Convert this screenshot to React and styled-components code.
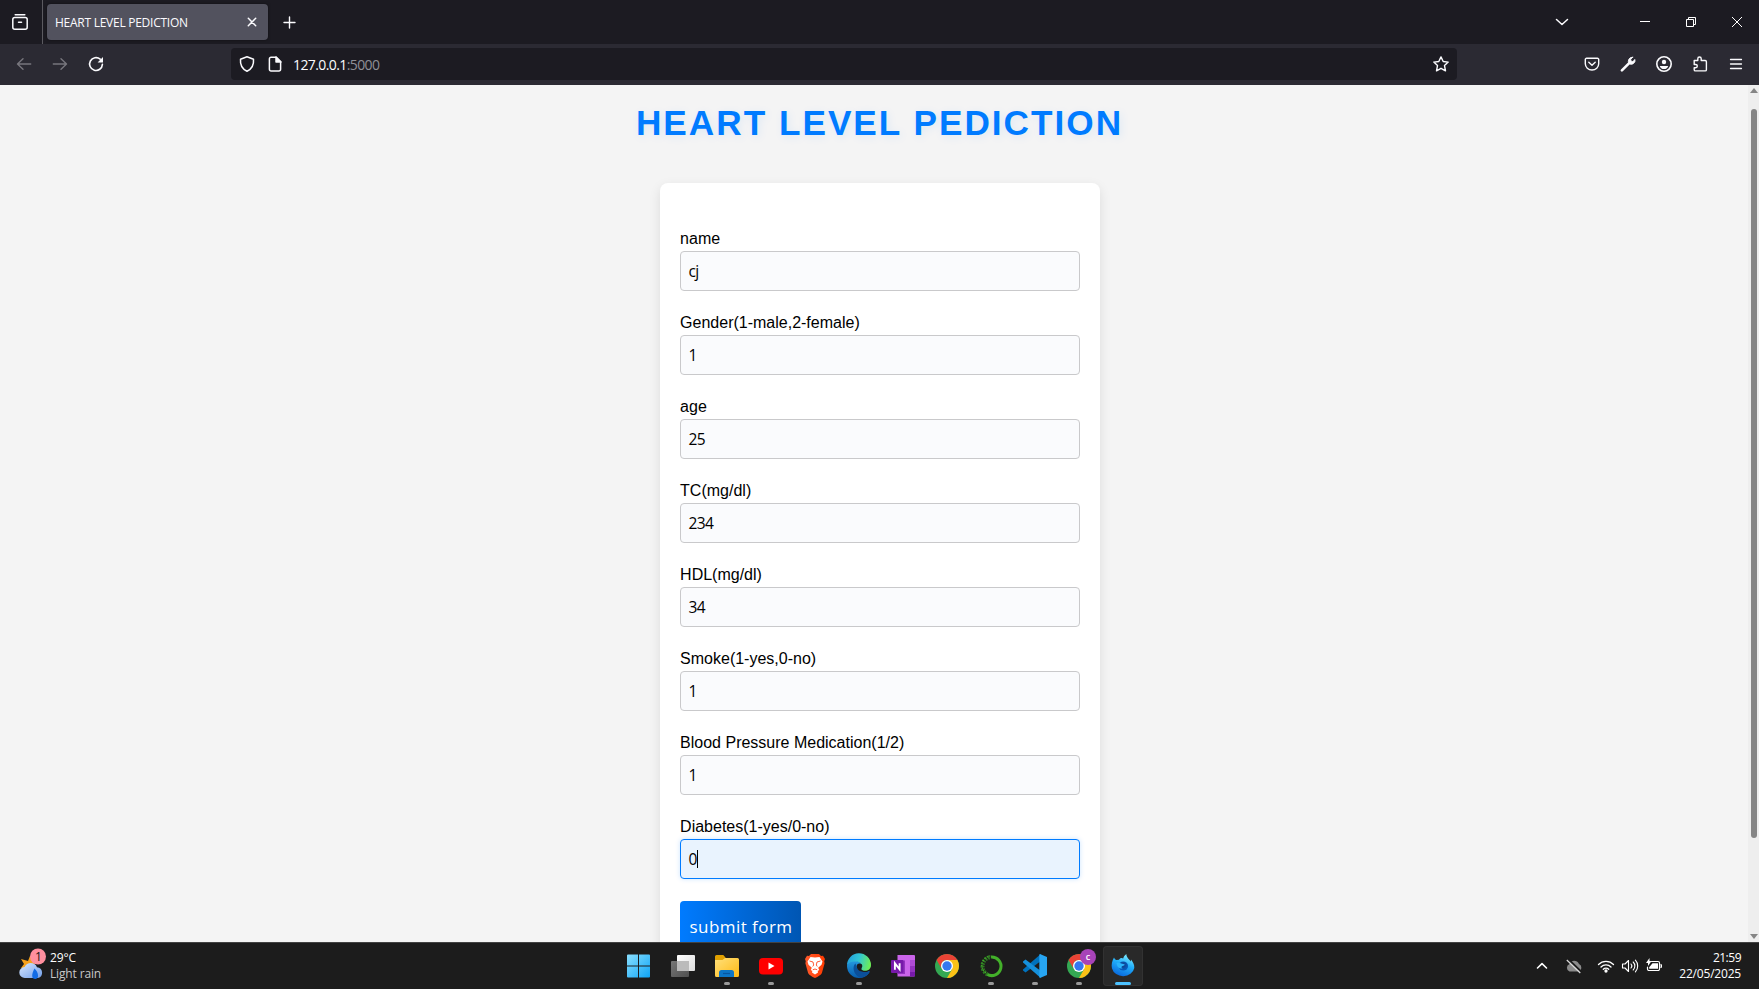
import React from 'react';
import styled, { createGlobalStyle } from 'styled-components';

const ui = '"Open Sans", "Noto Sans", sans-serif';

const GlobalStyle = createGlobalStyle`
  * { box-sizing: border-box; }
  html, body { margin: 0; overflow: hidden; }
  body { font-family: ${ui}; }
  svg { display: block; flex: none; overflow: visible; }
`;

const Screen = styled.div`
  width: 1759px;
  height: 989px;
  display: flex;
  flex-direction: column;
  overflow: hidden;
`;

/* ---------- browser chrome ---------- */
const TabStrip = styled.div`
  height: 44px;
  flex: none;
  display: flex;
  align-items: center;
  background: #1c1b22;
  color: #fbfbfe;
`;
const Slot = styled.div`
  width: ${(p) => p.$w || 36}px;
  height: 36px;
  flex: none;
  display: flex;
  align-items: center;
  justify-content: center;
  color: ${(p) => p.$color || '#fbfbfe'};
`;
const ArchiveSlot = styled(Slot)`
  width: 43px;
  height: 44px;
  padding-right: 2px;
  border-right: 1px solid #5b5a60;
`;
const NewTabSlot = styled(Slot)`
  width: 35px;
  padding-top: 2px;
`;
const Tab = styled.div`
  width: 221px;
  height: 36px;
  margin: 0 4px;
  padding: 0 8px;
  display: flex;
  align-items: center;
  justify-content: space-between;
  border-radius: 4px;
  background: #52525e;
  box-shadow: 0 0 3px rgba(0, 0, 0, 0.5);
`;
const TabTitle = styled.span`
  padding-top: 1px;
  font-size: 12px;
  line-height: 16px;
  letter-spacing: -0.26px;
  white-space: nowrap;
`;
const Spacer = styled.div`
  flex: 1;
`;
const WindowControls = styled.div`
  display: flex;
  margin-left: 42px;
  margin-right: -1px;
`;
const NavBar = styled.div`
  height: 41px;
  flex: none;
  display: flex;
  align-items: center;
  padding: 0 5px 1px 6px;
  background: #2b2a33;
`;
const UrlBar = styled.div`
  width: 1226px;
  height: 32px;
  margin-left: 117px;
  display: flex;
  align-items: center;
  padding-left: 2px;
  padding-right: 2px;
  border-radius: 4px;
  background: #1c1b22;
`;
const Url = styled.span`
  flex: 1;
  margin-left: 4px;
  padding-top: 2px;
  font-size: 14px;
  line-height: 20px;
  letter-spacing: -0.6px;
  color: #fbfbfe;
  white-space: nowrap;
`;
const Port = styled.span`
  color: #8f8f96;
`;

/* ---------- page ---------- */
const Viewport = styled.div`
  flex: 1;
  min-height: 0;
  display: flex;
  background: #f4f4f4;
`;
const Page = styled.main`
  flex: 1;
  min-width: 0;
  padding-left: 11px;
  display: flex;
  flex-direction: column;
  align-items: center;
  overflow: hidden;
  font-family: "Liberation Sans", Arial, sans-serif;
`;
const Title = styled.h1`
  flex: none;
  margin: 18px 0 0;
  height: 40px;
  font-size: 35.2px;
  line-height: 40px;
  font-weight: 700;
  letter-spacing: 2px;
  color: #007bff;
  text-shadow: 2px 2px 8px rgba(0, 123, 255, 0.1);
  white-space: nowrap;
`;
const Card = styled.section`
  flex: none;
  width: 440px;
  margin-top: 40px;
  padding: 46px 20px 20px;
  border-radius: 8px;
  background: #fff;
  box-shadow: 0 4px 12px rgba(0, 0, 0, 0.1);
`;
const Field = styled.label`
  display: block;
  height: 84px;
`;
const Caption = styled.span`
  display: block;
  height: 22px;
  padding-left: 0.6px;
  font-size: 16px;
  line-height: 20px;
  color: #000;
`;
const Input = styled.div`
  height: 40px;
  padding: 0 8px;
  display: flex;
  align-items: center;
  border: 1px solid ${(p) => (p.$focused ? '#007bff' : '#c9c9cb')};
  border-radius: 4px;
  background: ${(p) => (p.$focused ? '#e9f3fe' : '#fafbfd')};
  box-shadow: ${(p) => (p.$focused ? '0 0 5px rgba(0, 123, 255, 0.2)' : 'none')};
  font-family: ${ui};
  font-size: 15.5px;
  letter-spacing: -0.6px;
  color: #000;
`;
const Caret = styled.span`
  width: 1px;
  height: 18px;
  background: #000;
`;
const Submit = styled.button`
  display: block;
  width: 121px;
  height: 52px;
  padding: 0 0 2px 2px;
  border: 0;
  border-radius: 4px;
  background: linear-gradient(to right, #007bff, #0056b3);
  color: #fff;
  font-family: ${ui};
  font-size: 17px;
  letter-spacing: 0.45px;
  white-space: nowrap;
`;
const Scrollbar = styled.div`
  width: 11px;
  display: flex;
  flex-direction: column;
  align-items: center;
  padding: 3px 0;
  background: #eeeeee;
`;
const Thumb = styled.div`
  width: 6px;
  height: 729px;
  margin-top: 16px;
  border-radius: 3px;
  background: #858585;
`;

/* ---------- taskbar ---------- */
const Taskbar = styled.div`
  height: 47px;
  flex: none;
  display: grid;
  grid-template-columns: 619px 524px 1fr;
  border-top: 1px solid #424242;
  background: #1c1c1c;
  color: #fff;
`;
const Weather = styled.div`
  display: flex;
  align-items: center;
  padding-left: 19px;
  gap: 6px;
`;
const Lines = styled.div`
  display: flex;
  flex-direction: column;
  align-items: ${(p) => (p.$end ? 'flex-end' : 'flex-start')};
  font-size: 12px;
  line-height: 16px;
  white-space: nowrap;
`;
const Line = styled.span`
  letter-spacing: ${(p) => p.$track}px;
  color: ${(p) => (p.$dim ? '#c8c8c8' : '#fff')};
`;
const Apps = styled.div`
  display: flex;
  gap: 4px;
  padding-top: 3px;
`;
const AppButton = styled.div`
  width: 40px;
  height: 40px;
  display: flex;
  flex-direction: column;
  align-items: center;
  padding-top: 8px;
  border-radius: 4px;
  background: ${(p) => (p.$active ? '#292929' : 'transparent')};
  box-shadow: ${(p) => (p.$active ? 'inset 0 0 0 1px #323232' : 'none')};
`;
const Running = styled.div`
  width: ${(p) => (p.$active ? 16 : 6)}px;
  height: 3px;
  margin-top: 4px;
  border-radius: 2px;
  background: ${(p) => (p.$active ? '#4cc2ff' : '#999')};
`;
const Tray = styled.div`
  display: flex;
  align-items: center;
  justify-content: flex-end;
  padding-right: 18px;
`;
const TraySlot = styled.div`
  width: ${(p) => p.$w}px;
  flex: none;
  display: flex;
  justify-content: center;
`;
const Clock = styled(Lines)`
  width: 71px;
`;

const Glyph = ({ size = 16, sw = 1.4, children }) => (
  <svg width={size} height={size} viewBox={`0 0 ${size} ${size}`} fill="none" stroke="currentColor" strokeWidth={sw} strokeLinecap="round" strokeLinejoin="round">
    {children}
  </svg>
);

const Archive = () => (
  <Glyph sw={1.5}>
    <path d="M3.2 .8h9.6" />
    <rect x=".8" y="3.5" width="14.4" height="11.7" rx="2" />
    <path d="M6.5 8.2h3" />
  </Glyph>
);
const Back = () => <Glyph><path d="M14.7 8H1.7M7 2.7 1.5 8 7 13.3" /></Glyph>;
const Forward = () => <Glyph><path d="M1.3 8h13M9 2.7 14.5 8 9 13.3" /></Glyph>;
const Reload = () => (
  <Glyph sw={1.6}>
    <path d="M12.2 3.2A6.4 6.4 0 1 0 14.4 8.4" />
    <path d="M15 1v5.4H9.6z" fill="currentColor" stroke="none" />
  </Glyph>
);
const Shield = () => <Glyph sw={1.5}><path d="M8 .7 14.5 3.2c.5 5.4-1.7 9.7-6.5 12C3.2 12.900 1 8.600 1.500 3.200z" /></Glyph>;
const PageIcon = () => (
  <Glyph sw={1.5}>
    <path d="M4 1.300h5.200L13.600 5.700v7.600a1.600 1.600 0 0 1-1.600 1.600H4a1.600 1.600 0 0 1-1.600-1.600V2.900A1.600 1.600 0 0 1 4 1.300z" />
    <path d="M9 1v5h5z" fill="currentColor" />
  </Glyph>
);
const Star = () => <Glyph sw={1.4}><path d="M8 .9 10.200 5.500l5 .6-3.700 3.500 1 5.200L8 12.300l-4.500 2.500 1-5.200L.8 6.100l5-.6z" /></Glyph>;
const Pocket = () => (
  <Glyph sw={1.4}>
    <path d="M2.500 2.300h11a1.200 1.200 0 0 1 1.200 1.200v4.300a6.700 6.200 0 0 1-13.400 0V3.500a1.200 1.200 0 0 1 1.200-1.200z" />
    <path d="M4.800 6.300 8 9.300l3.200-3" />
  </Glyph>
);
const Wrench = () => (
  <Glyph>
    <path d="m1.900 14.300 7-7" strokeWidth="2.600" />
    <path d="M12.600 1.200 10.700 3.500l.4 1.700 1.700.4 2.200-2.100a4 4 0 0 1-5.600 4.400 4 4 0 0 1 3.200-6.700z" fill="currentColor" strokeWidth=".9" />
  </Glyph>
);
const Account = () => (
  <Glyph sw={1.600}>
    <circle cx="8" cy="8" r="7.200" />
    <circle cx="8" cy="6" r="2.200" fill="currentColor" stroke="none" />
    <path d="M3.800 10h8.400c-.4 2-2 3.100-4.200 3.100S4.200 12 3.800 10z" fill="currentColor" stroke="none" />
  </Glyph>
);
const Extension = () => (
  <Glyph sw={1.400}>
    <path d="M2.200 4.500h3.600V2.700a1.700 1.700 0 0 1 3.400 0v1.800h4a1.200 1.200 0 0 1 1.200 1.200v8a1.200 1.200 0 0 1-1.200 1.200H3.400a1.200 1.200 0 0 1-1.200-1.200v-2h1.500a1.600 1.600 0 0 0 0-3.200H2.200z" />
  </Glyph>
);
const Menu = () => <Glyph sw={1.300}><path d="M2.500 3.500h11M2.500 8h11M2.500 12.500h11" /></Glyph>;

const WindowsLogo = () => (
  <svg width="24" height="24">
    <defs><linearGradient id="win" x1="0" y1="0" x2="24" y2="24" gradientUnits="userSpaceOnUse"><stop stopColor="#8be0ff" /><stop offset="1" stopColor="#0aa2f5" /></linearGradient></defs>
    <path fill="url(#win)" d="M0 1.500a1 1 0 0 1 1-1h10v11H0zM12 .5h10a1 1 0 0 1 1 1v10H12zM0 12.500h11v11H1a1 1 0 0 1-1-1zM12 12.500h11v10a1 1 0 0 1-1 1H12z" />
  </svg>
);
const TaskView = () => (
  <svg width="24" height="24">
    <defs>
      <linearGradient id="tvl" x1="0" x2="1" y1="0" y2="1"><stop stopColor="#fff" /><stop offset="1" stopColor="#ddd" /></linearGradient>
      <linearGradient id="tvd" x1="0" x2="1" y1="0" y2="1"><stop stopColor="#777" /><stop offset="1" stopColor="#505050" /></linearGradient>
    </defs>
    <rect x="0" y="7" width="18" height="16" rx="1" fill="url(#tvd)" />
    <rect x="6" y="1" width="18" height="16" rx="1" fill="url(#tvl)" />
    <path d="M6 7h12v10H6z" fill="#bbb" />
  </svg>
);
const Folder = () => (
  <svg width="24" height="24">
    <defs><linearGradient id="fold" x1="0" x2="1" y1="0" y2="1"><stop stopColor="#ffe07a" /><stop offset="1" stopColor="#ffb914" /></linearGradient></defs>
    <path d="M0 2.500A1.500 1.500 0 0 1 1.500 1h6.800l2.200 2.500V8H0z" fill="#e0a000" />
    <path d="M0 6h7.500l2.500-2h12.500A1.500 1.500 0 0 1 24 5.500v16a1.500 1.500 0 0 1-1.500 1.500h-21A1.500 1.500 0 0 1 0 21.500z" fill="url(#fold)" />
    <path d="M4 23v-4.500A2.500 2.500 0 0 1 6.500 16h10a2.500 2.500 0 0 1 2.500 2.500V23z" fill="#0c75c7" />
    <path d="M8 19.500h7" stroke="#0755a0" strokeWidth="1.200" />
  </svg>
);
const Youtube = () => (
  <svg width="24" height="24">
    <rect x="0" y="4" width="24" height="16.500" rx="4" fill="#f00" />
    <path d="M9.500 8.500v7l6-3.500z" fill="#fff" />
  </svg>
);
const Brave = () => (
  <svg width="24" height="24">
    <defs><linearGradient id="brv"><stop stopColor="#ff5a2c" /><stop offset="1" stopColor="#ff3a00" /></linearGradient></defs>
    <path d="M8 0h8l2 2 2-.2L22 5l-.8 2.200.4 2-2.700 9.800c-.4 1.400-3.900 3.800-6.900 5-3-1.200-6.500-3.600-6.900-5L2.400 9.200l.4-2L2 5l2-3.200L6 2z" fill="url(#brv)" />
    <path d="M12 3.600 16.500 3l3 4.400-1 3.400-3.300 3 1 2.200-1.500.9L15 18.500l-3 2-3-2 .3-1.600-1.500-.9 1-2.200-3.300-3-1-3.400 3-4.400z" fill="#fff" />
    <path d="m6.500 7 3.500 1 .7 3-1 1.500M17.500 7 14 8l-.7 3 1 1.500M9.800 15.800l2.200-.8 2.200.8" stroke="#ff4820" strokeWidth=".9" fill="none" />
  </svg>
);
const Edge = () => (
  <svg width="24" height="24">
    <defs>
      <linearGradient id="ed1" x1="0" x2="1" y1=".2" y2=".4"><stop stopColor="#229ddd" /><stop offset=".5" stopColor="#31c5d5" /><stop offset="1" stopColor="#6ced58" /></linearGradient>
      <linearGradient id="ed2" x1="0" x2="0" y1="0" y2="1"><stop stopColor="#2499df" /><stop offset="1" stopColor="#075cad" /></linearGradient>
    </defs>
    <path d="M0 12C.6 6 4 7 8 7c4 0 7 2 7 5.500 0 1.500-1 2-1 3 0 1.500 2 2.500 4.500 2.500 2 0 3.500-1 4-.7.600.3-2.500 6.700-10.500 6.700A12 12 0 0 1 0 12z" fill="url(#ed2)" />
    <path d="M8.500 9.500C5 12 6 21.500 14 23.800 20 23 23 18 22.500 17.300c-.4-.4-2 .8-4.500.8-4.500 0-8.500-2.600-8.500-5.600z" fill="#0b4f99" />
    <path d="M0 11.500A12 12 0 0 1 24 11c0 4-2.800 5.800-6 5.800-2.500 0-3.800-.8-3.800-1.600s.9-1.200.9-2.700C15 9.400 12 7.500 8.500 7.500 4 7.500.8 9 0 11.500z" fill="url(#ed1)" />
    <path d="M14.700 10.300c-2-1.600-5-.9-5 2 0 2.500 1.500 4.300 4.600 5.300 2.700.8 5.200.5 7-.9-3 1-7.300.2-7.100-1.600.1-1.200 2-2.500.5-4.800z" fill="#1c1c1c" />
  </svg>
);
const OneNote = () => (
  <svg width="24" height="24">
    <path d="M6.500 1H23a1 1 0 0 1 1 1v19.500a1 1 0 0 1-1 1H6.500z" fill="#ca64ea" />
    <path d="M19 6h5v6h-5z" fill="#ae4bd5" /><path d="M19 12h5v5.500h-5z" fill="#9332bf" /><path d="M19 17.500h5v4a1 1 0 0 1-1 1h-4z" fill="#7719aa" />
    <path d="M6.500 6.500H14V20H6.500z" fill="#9332bf" />
    <rect x="0" y="6" width="12.500" height="13" rx="1" fill="#7719aa" />
    <path d="M3.900 15.800V9.300l4.700 6V9.200" stroke="#fff" strokeWidth="1.900" fill="none" />
  </svg>
);
const Chrome = ({ badge }) => (
  <svg width="24" height="24">
    <circle cx="12" cy="12" r="12" fill="#34a853" />
    <path d="M12 6h10.390A12 12 0 0 1 12 24l5.200-9z" fill="#fbc116" />
    <path d="M1.610 6A12 12 0 0 1 22.390 6H12a6 6 0 0 0-5.200 9z" fill="#ea4335" />
    <circle cx="12" cy="12" r="6" fill="#fff" /><circle cx="12" cy="12" r="4.700" fill="#3478f0" />
    {badge && <><circle cx="21" cy="3" r="8" fill="#a743b8" /><text x="21" y="6" textAnchor="middle" fontFamily="Open Sans" fontWeight="600" fontSize="9" fill="#fff">c</text></>}
  </svg>
);
const Anaconda = () => (
  <svg width="24" height="24" fill="none" stroke="#43b02a">
    <path d="M12 3a9.300 9.300 0 1 1-4 17.300" strokeWidth="3" />
    <path d="M8.500 20.500A9.300 9.300 0 0 1 12 3" strokeWidth="4" strokeDasharray="1.700 1.200" stroke="#2f7d22" />
    <path d="M7 19A9.300 9.300 0 0 1 11 2" strokeWidth="1.300" strokeDasharray="1.200 1.500" />
  </svg>
);
const VSCode = () => (
  <svg width="24" height="24">
    <path d="M17.500.2v7L2.500 18.600 0 16.500v-1z" fill="#0072bd" />
    <path d="M17.500 23.800v-7L2.500 5.400 0 7.500v1z" fill="#1590db" />
    <path d="M17.500.2 24 3v18l-6.500 2.800c-.8.3-1.200-.2-1.200-1V1.200c0-.8.400-1.300 1.200-1z" fill="#27a5f2" />
  </svg>
);
const Firefox = () => (
  <svg width="24" height="24">
    <defs>
      <linearGradient id="ff" x1=".7" x2=".3" y1="0" y2="1"><stop stopColor="#85efff" /><stop offset=".45" stopColor="#20aefa" /><stop offset="1" stopColor="#0866dc" /></linearGradient>
      <radialGradient id="ffc" cx=".45" cy=".4"><stop stopColor="#133b80" /><stop offset="1" stopColor="#075abb" /></radialGradient>
    </defs>
    <path d="M3 3.500c.6 1.400 1.500 2.200 2.600 2.600L8 5.800C9 4 10.500 3.500 12.200 4.500 12.500 3 13.300 1.500 15.300 0c.3 4 3.200 5.300 4.500 7.500L20 5.500c2 2.500 3.500 5 3.300 8.500A11.400 10 0 0 1 1 14.500C0 11 1.200 6.500 3 3.500z" fill="url(#ff)" />
    <ellipse cx="12.300" cy="12" rx="4.800" ry="4.500" fill="url(#ffc)" />
    <path d="M5.500 9.200c2-.8 3.500-.4 4.700.3 1.300.6 3 .4 3.600 1.200-.3 1-2.300 1-3 1.700-.7.600-.4 1.600 1 1.800-2.800 1.300-5.800-.8-6.300-5z" fill="#2bb4fb" />
  </svg>
);
const WeatherIcon = () => (
  <svg width="25" height="32" viewBox="0 0 25 32">
    <defs><linearGradient id="cl" x1="0" x2="1" y1="0" y2="1"><stop stopColor="#d9e8ff" /><stop offset="1" stopColor="#719ee8" /></linearGradient></defs>
    <path d="m11 6-2 5-7-2 3 5-3 4 8 2 8-9z" fill="#f5a11c" />
    <path d="M6 28a5.500 5.500 0 0 1-.4-11C8 11.500 16 12 18 17.200A5.500 5.500 0 0 1 19 28z" fill="url(#cl)" />
    <path d="M15.500 18.500c4 3.500 5 10 1 10.500-4.500 0-4-5-1-10.500z" fill="#126be4" />
    <circle cx="19" cy="6.500" r="8" fill="#ff8f9e" />
    <text x="19.500" y="10.800" textAnchor="middle" fontFamily="Open Sans" fontSize="12" fill="#151515">1</text>
  </svg>
);

const FIELDS = [
  ['name', 'cj'],
  ['Gender(1-male,2-female)', '1'],
  ['age', '25'],
  ['TC(mg/dl)', '234'],
  ['HDL(mg/dl)', '34'],
  ['Smoke(1-yes,0-no)', '1'],
  ['Blood Pressure Medication(1/2)', '1'],
  ['Diabetes(1-yes/0-no)', '0', true],
];

const APPS = [
  [<WindowsLogo />],
  [<TaskView />],
  [<Folder />, true],
  [<Youtube />, true],
  [<Brave />],
  [<Edge />, true],
  [<OneNote />],
  [<Chrome />],
  [<Anaconda />, true],
  [<VSCode />, true],
  [<Chrome badge />, true],
  [<Firefox />, true, true],
];

export default function App() {
  return (
    <Screen>
      <GlobalStyle />
      <TabStrip>
        <ArchiveSlot><Archive /></ArchiveSlot>
        <Tab>
          <TabTitle>HEART LEVEL PEDICTION</TabTitle>
          <Slot $w={16}><Glyph sw={1.500}><path d="m4.300 4.300 7.400 7.400M11.700 4.300l-7.400 7.400" /></Glyph></Slot>
        </Tab>
        <NewTabSlot><Glyph sw={1.400}><path d="M7.500 2v11M2 7.500h11" /></Glyph></NewTabSlot>
        <Spacer />
        <Slot><Glyph sw={1.500}><path d="m2.500 5.500 5.500 5 5.500-5" /></Glyph></Slot>
        <WindowControls>
          <Slot $w={46}><svg width="10" height="10"><path d="M0 4.500h10" stroke="#fff" /></svg></Slot>
          <Slot $w={46}><svg width="10" height="10" fill="none" stroke="#fff"><path d="M.5 2.500h7v7h-7zM2.500 2.500v-2h7v7h-2" /></svg></Slot>
          <Slot $w={46}><svg width="10" height="10"><path d="m0 0 10 10M10 0 0 10" stroke="#fff" /></svg></Slot>
        </WindowControls>
      </TabStrip>
      <NavBar>
        <Slot $color="#77767d"><Back /></Slot>
        <Slot $color="#77767d"><Forward /></Slot>
        <Slot><Reload /></Slot>
        <UrlBar>
          <Slot $w={28}><Shield /></Slot>
          <Slot $w={28}><PageIcon /></Slot>
          <Url>127.0.0.1<Port>:5000</Port></Url>
          <Slot $w={28}><Star /></Slot>
        </UrlBar>
        <Spacer />
        <Slot><Pocket /></Slot>
        <Slot><Wrench /></Slot>
        <Slot><Account /></Slot>
        <Slot><Extension /></Slot>
        <Slot><Menu /></Slot>
      </NavBar>
      <Viewport>
        <Page>
          <Title>HEART LEVEL PEDICTION</Title>
          <Card>
            {FIELDS.map(([caption, value, focused]) => (
              <Field key={caption}>
                <Caption>{caption}</Caption>
                <Input $focused={focused}>{value}{focused && <Caret />}</Input>
              </Field>
            ))}
            <Submit type="button">submit form</Submit>
          </Card>
        </Page>
        <Scrollbar>
          <svg width="8" height="5"><path d="M4 0 8 5H0z" fill="#858585" /></svg>
          <Thumb />
          <Spacer />
          <svg width="8" height="5"><path d="M4 5 8 0H0z" fill="#858585" /></svg>
        </Scrollbar>
      </Viewport>
      <Taskbar>
        <Weather>
          <WeatherIcon />
          <Lines>
            <Line $track={-0.1}>29°C</Line>
            <Line $track={-0.15} $dim>Light rain</Line>
          </Lines>
        </Weather>
        <Apps>
          {APPS.map(([icon, running, active], i) => (
            <AppButton key={i} $active={active}>
              {icon}
              {running && <Running $active={active} />}
            </AppButton>
          ))}
        </Apps>
        <Tray>
          <TraySlot $w={32}><Glyph sw={1.600}><path d="M3.500 10 8 5.700l4.500 4.300" /></Glyph></TraySlot>
          <TraySlot $w={32}>
            <svg width="16" height="16"><path d="M3.500 13.500a4 4 0 0 1 0-7.500c1.500-4 7.500-4.500 9.500 0a4 4 0 0 1-.5 7.500z" fill="#8a8a8a" /><path d="m2 1 13.500 13" stroke="#1c1c1c" strokeWidth="2" /><path d="m.8 2 13.500 13" stroke="#ddd" strokeWidth="1.200" /></svg>
          </TraySlot>
          <TraySlot $w={32}>
            <Glyph sw={1.300}><path d="M.5 6.500a10.500 10.500 0 0 1 15 0M3 9a7 7 0 0 1 10 0M5.300 11.300a3.800 3.800 0 0 1 5.400 0" /><circle cx="8" cy="13" r="1" fill="currentColor" /></Glyph>
          </TraySlot>
          <TraySlot $w={16}>
            <Glyph sw={1.100}><path d="M.5 6H3l3.500-3.500v11L3 10H.5zM9 6a3 3 0 0 1 0 4M11.200 4a5.700 5.700 0 0 1 0 8M13.400 2.200a8.500 8.500 0 0 1 0 11.600" /></Glyph>
          </TraySlot>
          <TraySlot $w={32}>
            <Glyph sw={1.200}><path d="M5.500 3.500H12A1.500 1.500 0 0 1 13.500 5v6a1.500 1.500 0 0 1-1.500 1.500H3A1.500 1.500 0 0 1 1.500 11V9M14.800 6.800h.6v2.400h-.6" /><path d="M6.500 5.200H12v5.600H3.200V9.300z" fill="currentColor" stroke="none" /><path d="M3.500 0v3H5.500L2 8V5H0z" fill="currentColor" stroke="none" /></Glyph>
          </TraySlot>
          <Clock $end>
            <Line $track={-0.5}>21:59</Line>
            <Line $track={-0.2}>22/05/2025</Line>
          </Clock>
        </Tray>
      </Taskbar>
    </Screen>
  );
}
